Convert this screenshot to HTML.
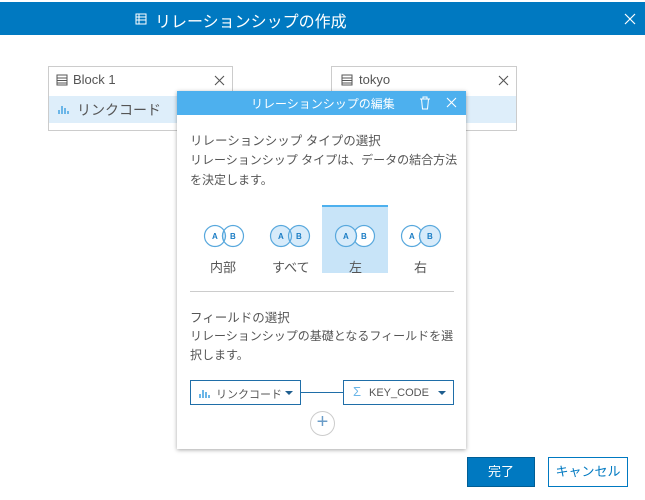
<!DOCTYPE html>
<html><head><meta charset="utf-8"><style>
*{margin:0;padding:0;box-sizing:border-box}
body{width:645px;height:500px;background:#fff;font-family:"Liberation Sans","Noto Sans CJK JP",sans-serif;position:relative;overflow:hidden;color:#4a4a4a}
.abs{position:absolute}
.hdr{left:0;top:2px;width:645px;height:33px;background:#0079c1;color:#fff}
.card{border:1px solid #ccc;background:#fff}
.pop{left:177px;top:91px;width:289px;height:358px;background:#fff;box-shadow:0 1px 4px rgba(0,0,0,.35)}
.t{font-size:13px;color:#555;white-space:nowrap}
.dd{border:1px solid #1f6ea8;height:25px;background:#fff;font-size:11px;color:#555}
</style></head><body>
<div class="abs hdr">
 <svg class="abs" style="left:135px;top:11px" width="12" height="12"><rect x="1" y="1" width="10" height="10" fill="none" stroke="#fff"/><path d="M1 4h10M1 7h10M4 1v10" stroke="#fff"/></svg>
 <div class="abs" style="left:155px;top:6px;font-size:16px">リレーションシップの作成</div>
 <svg class="abs" style="left:624px;top:11px" width="12" height="12"><path d="M1 1l10 10M11 1L1 11" stroke="#fff" stroke-width="1.2"/></svg>
</div>
<div class="abs card" style="left:48px;top:66px;width:185px;height:65px">
 <svg class="abs" style="left:7px;top:7px" width="12" height="12"><rect x="1" y="1" width="10" height="10" fill="none" stroke="#555"/><path d="M1 4h10M1 6.5h10M1 9h10" stroke="#555"/></svg>
 <div class="abs t" style="left:24px;top:5px">Block 1</div>
 <svg class="abs" style="left:165px;top:8px" width="11" height="11"><path d="M1 1l9 9M10 1L1 10" stroke="#555" stroke-width="1.1"/></svg>
 <div class="abs" style="left:0;top:29px;width:183px;height:27px;background:#deeefa"></div>
 <svg class="abs" style="left:9px;top:36px" width="12" height="12"><path d="M1 11V7M4 11V3M7 11V5M10 11V8" stroke="#6bb6e8" stroke-width="2"/></svg>
 <div class="abs t" style="left:28px;top:33px;font-size:14px">リンクコード</div>
</div>
<div class="abs card" style="left:331px;top:66px;width:186px;height:65px">
 <svg class="abs" style="left:9px;top:7px" width="12" height="12"><rect x="1" y="1" width="10" height="10" fill="none" stroke="#555"/><path d="M1 4h10M1 6.5h10M1 9h10" stroke="#555"/></svg>
 <div class="abs t" style="left:27px;top:5px">tokyo</div>
 <svg class="abs" style="left:166px;top:8px" width="11" height="11"><path d="M1 1l9 9M10 1L1 10" stroke="#555" stroke-width="1.1"/></svg>
 <div class="abs" style="left:0;top:29px;width:184px;height:27px;background:#deeefa"></div>
</div>
<div class="abs pop">
 <div class="abs" style="left:0;top:0;width:289px;height:24px;background:#4db0ee;color:#fff">
  <div class="abs" style="left:74px;top:4px;font-size:12px">リレーションシップの編集</div>
  <svg class="abs" style="left:242px;top:5px" width="12" height="14"><path d="M1 3h10M4 3V1h4v2M2.5 3l1 10h5l1-10" fill="none" stroke="#fff"/></svg>
  <svg class="abs" style="left:269px;top:6px" width="11" height="11"><path d="M1 1l9 9M10 1L1 10" stroke="#fff" stroke-width="1.1"/></svg>
 </div>
 <div class="abs t" style="left:13px;top:39px;font-size:12.5px">リレーションシップ タイプの選択</div>
 <div class="abs t" style="left:13px;top:59px;font-size:12px;line-height:20px;white-space:normal;width:275px">リレーションシップ タイプは、データの結合方法を決定します。</div>
 <div class="abs" style="left:145px;top:114px;width:66px;height:68px;background:#c8e4f8;border-top:2px solid #4db0ee"></div>
 <svg class="abs" style="left:0;top:130px" width="289" height="30">
  <g font-family="Liberation Sans" font-size="8" font-weight="bold" fill="#1a7cc4" stroke-width="1.2">
   <g transform="translate(47,15)"><circle cx="-9" r="10.5" fill="#fff" stroke="#58a8dd"/><circle cx="9" r="10.5" fill="#fff" stroke="#58a8dd"/><path d="M0 -5.3A10.5 10.5 0 0 1 0 5.3A10.5 10.5 0 0 1 0 -5.3" fill="#d7ebfa" stroke="#58a8dd"/><text x="-12" y="3">A</text><text x="6" y="3">B</text></g>
   <g transform="translate(113,15)"><circle cx="-9" r="10.5" fill="#d7ebfa" stroke="#58a8dd"/><circle cx="9" r="10.5" fill="#d7ebfa" stroke="#58a8dd"/><path d="M0 -5.3A10.5 10.5 0 0 1 0 5.3" fill="none" stroke="#58a8dd"/><text x="-12" y="3">A</text><text x="6" y="3">B</text></g>
   <g transform="translate(178,15)"><circle cx="9" r="10.5" fill="#fff" stroke="#58a8dd"/><circle cx="-9" r="10.5" fill="#d7ebfa" stroke="#58a8dd"/><path d="M0 -5.3A10.5 10.5 0 0 1 0 5.3" fill="none" stroke="#58a8dd"/><text x="-12" y="3">A</text><text x="6" y="3">B</text></g>
   <g transform="translate(244,15)"><circle cx="-9" r="10.5" fill="#fff" stroke="#58a8dd"/><circle cx="9" r="10.5" fill="#d7ebfa" stroke="#58a8dd"/><path d="M0 -5.3A10.5 10.5 0 0 0 0 5.3" fill="none" stroke="#58a8dd"/><text x="-12" y="3">A</text><text x="6" y="3">B</text></g>
  </g>
 </svg>
 <div class="abs t" style="left:33px;top:166px">内部</div>
 <div class="abs t" style="left:95px;top:166px">すべて</div>
 <div class="abs t" style="left:172px;top:166px">左</div>
 <div class="abs t" style="left:237px;top:166px">右</div>
 <div class="abs" style="left:13px;top:200px;width:264px;height:1px;background:#ccc"></div>
 <div class="abs t" style="left:13px;top:216px;font-size:12.5px">フィールドの選択</div>
 <div class="abs t" style="left:13px;top:236px;font-size:12px;line-height:19px;white-space:normal;width:275px">リレーションシップの基礎となるフィールドを選択します。</div>
 <div class="abs dd" style="left:13px;top:289px;width:111px">
  <svg class="abs" style="left:8px;top:6px" width="12" height="12"><path d="M1 11V7M4 11V3M7 11V5M10 11V8" stroke="#6bb6e8" stroke-width="2"/></svg>
  <div class="abs" style="left:25px;top:5px">リンクコード</div>
  <div class="abs" style="left:94px;top:10px;border:4px solid transparent;border-top:4px solid #1f5f8f"></div>
 </div>
 <div class="abs" style="left:124px;top:301px;width:43px;height:1px;background:#1f6ea8"></div>
 <div class="abs dd" style="left:166px;top:289px;width:111px">
  <div class="abs" style="left:9px;top:3px;font-size:13px;color:#6bb6e8">Σ</div>
  <div class="abs" style="left:25px;top:6px">KEY_CODE</div>
  <div class="abs" style="left:94px;top:10px;border:4px solid transparent;border-top:4px solid #1f5f8f"></div>
 </div>
 <div class="abs" style="left:133px;top:320px;width:25px;height:25px;border:1px solid #ccc;border-radius:50%;color:#6a9cc8;font-size:20px;line-height:21px;text-align:center">+</div>
</div>
<div class="abs" style="left:467px;top:457px;width:68px;height:30px;background:#0079c1;border:1px solid #005e95;color:#fff;font-size:13px;text-align:center;line-height:28px">完了</div>
<div class="abs" style="left:548px;top:457px;width:80px;height:30px;background:#fff;border:1px solid #0079c1;color:#0079c1;font-size:13px;text-align:center;line-height:28px">キャンセル</div>
</body></html>
